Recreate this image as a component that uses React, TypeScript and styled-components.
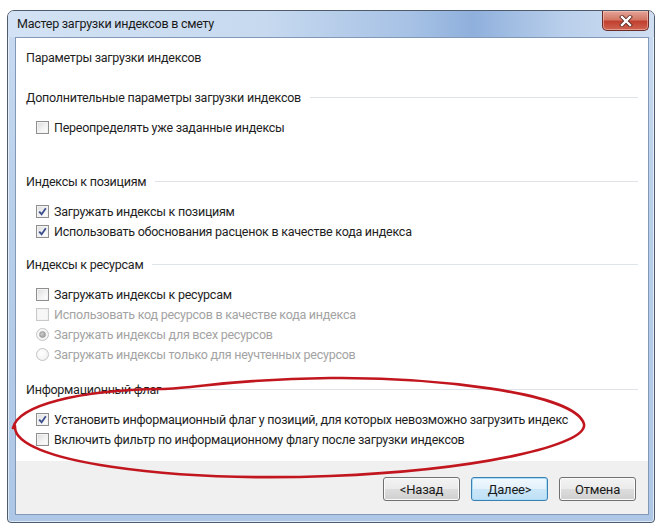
import React from "react";
import styled, { createGlobalStyle } from "styled-components";

const Global = createGlobalStyle`
  html, body { margin: 0; padding: 0; background: #ffffff; }
  body { font-family: Roboto, "Noto Sans", sans-serif; }
`;

const Root = styled.div`
  position: relative;
  width: 663px;
  height: 527px;
  overflow: hidden;
  background: #ffffff;
  padding: 10px 8px 4px 7px;
  box-sizing: border-box;
`;

const Window = styled.div`
  width: 648px;
  height: 513px;
  box-sizing: border-box;
  border: 1px solid #4d5b6c;
  border-radius: 7px 7px 4px 4px;
  background: linear-gradient(180deg, #c9dbf1 0%, #b8cfea 40%, #aec7e6 100%);
  display: flex;
  flex-direction: column;
  padding: 0 5px 7px 7px;
  box-shadow: inset 0 0 0 1px rgba(255, 255, 255, 0.6);
`;

const TitleBar = styled.div`
  height: 26px;
  display: flex;
  align-items: flex-start;
  margin: 0 -5px 0 -7px;
  padding-left: 9px;
  border-radius: 6px 6px 0 0;
  background: linear-gradient(
    90deg,
    #d3e2f4 0%,
    #c6d9ef 40%,
    #a7c2e5 62%,
    #8fb0dc 72%,
    #b9cfeb 86%,
    #d0def1 100%
  );
`;

const Title = styled.span`
  margin-top: 4px;
  font-size: 12.5px;
  line-height: 18px;
  color: #1a1a1a;
  letter-spacing: -0.25px;
`;

const CloseButton = styled.div`
  margin-left: auto;
  margin-right: 5px;
  width: 47px;
  height: 20px;
  box-sizing: border-box;
  border: 1px solid #6a2c26;
  border-top: none;
  border-radius: 0 0 5px 5px;
  background: linear-gradient(180deg, #e3a497 0%, #d47866 45%, #c2402f 55%, #cf6452 100%);
  display: flex;
  align-items: center;
  justify-content: center;
  box-shadow: inset 0 0 0 1px rgba(255, 210, 200, 0.5);
`;

const Client = styled.div`
  flex: 1;
  display: flex;
  flex-direction: column;
  border: 1px solid #8199b6;
  background: #ffffff;
`;

const Body = styled.div`
  flex: 1;
  padding: 10px 10px 0 10px;
  display: flex;
  flex-direction: column;
  font-size: 12.5px;
  letter-spacing: -0.25px;
  color: #1e1e1e;
`;

const PageTitle = styled.div`
  height: 20px;
  line-height: 20px;
`;

const Section = styled.div<{ $top: number }>`
  margin-top: ${(p) => p.$top}px;
  display: flex;
  flex-direction: column;
`;

const Header = styled.div`
  height: 20px;
  display: flex;
  align-items: center;
  gap: 9px;
  margin-bottom: 10px;
  &::after {
    content: "";
    flex: 1;
    height: 1px;
    background: #dde3e9;
  }
`;

const Row = styled.label<{ $disabled?: boolean }>`
  height: 20px;
  display: flex;
  align-items: center;
  gap: 5px;
  padding-left: 10px;
  color: ${(p) => (p.$disabled ? "#a3a3a3" : "#1e1e1e")};
`;

const Box = styled.span<{ $disabled?: boolean }>`
  width: 13px;
  height: 13px;
  box-sizing: border-box;
  flex: none;
  border: 1px solid ${(p) => (p.$disabled ? "#c9c9c9" : "#8f8f8f")};
  background: ${(p) =>
    p.$disabled
      ? "#f7f7f7"
      : "linear-gradient(135deg, #dcdcdc 0%, #f4f4f4 60%, #ffffff 100%)"};
  box-shadow: inset 0 0 0 1px ${(p) => (p.$disabled ? "#f2f2f2" : "#f3f3f3")};
  display: flex;
  align-items: center;
  justify-content: center;
`;

const Radio = styled.span<{ $checked?: boolean }>`
  width: 13px;
  height: 13px;
  box-sizing: border-box;
  flex: none;
  border-radius: 50%;
  border: 1px solid #c4c4c4;
  background: radial-gradient(circle at 40% 40%, #ffffff 0%, #ececec 100%);
  display: flex;
  align-items: center;
  justify-content: center;
  &::after {
    content: "";
    display: ${(p) => (p.$checked ? "block" : "none")};
    width: 5px;
    height: 5px;
    border-radius: 50%;
    background: radial-gradient(circle at 40% 40%, #d0d0d0 0%, #8e8e8e 100%);
    border: 1px solid #a0a0a0;
  }
`;

const Footer = styled.div`
  height: 53px;
  background: #f0f0f0;
  display: flex;
  align-items: center;
  justify-content: flex-end;
  gap: 11px;
  padding: 3px 12px 0 0;
  box-sizing: border-box;
`;

const Button = styled.div<{ $default?: boolean }>`
  width: 77px;
  height: 24px;
  box-sizing: border-box;
  border-radius: 3px;
  border: 1px solid ${(p) => (p.$default ? "#3c7fb1" : "#707070")};
  background: ${(p) =>
    p.$default
      ? "linear-gradient(180deg, #f0f8fd 0%, #e3f1fb 48%, #cbe6f8 52%, #bfe0f6 100%)"
      : "linear-gradient(180deg, #f3f3f3 0%, #ebebeb 48%, #dddddd 52%, #cfcfcf 100%)"};
  box-shadow: inset 0 0 0 1px ${(p) => (p.$default ? "#a9dcf6" : "#fbfbfb")};
  display: flex;
  align-items: center;
  justify-content: center;
  font-size: 13px;
  letter-spacing: -0.2px;
  color: #1a1a1a;
`;

const Overlay = styled.svg`
  position: absolute;
  left: 0;
  top: 0;
  width: 663px;
  height: 527px;
  pointer-events: none;
`;

const Check = () => (
  <svg width="9" height="9" viewBox="0 0 9 9">
    <path d="M1.2 4.6 L3.6 7.2 L7.8 1.2" fill="none" stroke="#3d4f8c" strokeWidth="1.8" />
  </svg>
);

const CheckRow: React.FC<{ checked?: boolean; disabled?: boolean; children: React.ReactNode }> = ({
  checked,
  disabled,
  children,
}) => (
  <Row $disabled={disabled}>
    <Box $disabled={disabled}>{checked && <Check />}</Box>
    {children}
  </Row>
);

const RadioRow: React.FC<{ checked?: boolean; children: React.ReactNode }> = ({ checked, children }) => (
  <Row $disabled>
    <Radio $checked={checked} />
    {children}
  </Row>
);

export default function App() {
  return (
    <>
      <Global />
      <Root>
        <Window>
          <TitleBar>
            <Title>Мастер загрузки индексов в смету</Title>
            <CloseButton>
              <svg width="14" height="12" viewBox="0 0 14 12">
                <path d="M3 2 L11 10 M11 2 L3 10" stroke="#5a2a24" strokeWidth="4" strokeLinecap="square" />
                <path d="M3 2 L11 10 M11 2 L3 10" stroke="#ffffff" strokeWidth="2.4" strokeLinecap="square" />
              </svg>
            </CloseButton>
          </TitleBar>
          <Client>
            <Body>
              <PageTitle>Параметры загрузки индексов</PageTitle>
              <Section $top={19}>
                <Header>Дополнительные параметры загрузки индексов</Header>
                <CheckRow>Переопределять уже заданные индексы</CheckRow>
              </Section>
              <Section $top={34}>
                <Header>Индексы к позициям</Header>
                <CheckRow checked>Загружать индексы к позициям</CheckRow>
                <CheckRow checked>Использовать обоснования расценок в качестве кода индекса</CheckRow>
              </Section>
              <Section $top={13}>
                <Header>Индексы к ресурсам</Header>
                <CheckRow>Загружать индексы к ресурсам</CheckRow>
                <CheckRow disabled>Использовать код ресурсов в качестве кода индекса</CheckRow>
                <RadioRow checked>Загружать индексы для всех ресурсов</RadioRow>
                <RadioRow>Загружать индексы только для неучтенных ресурсов</RadioRow>
              </Section>
              <Section $top={15}>
                <Header>Информационный флаг</Header>
                <CheckRow checked>
                  Установить информационный флаг у позиций, для которых невозможно загрузить индекс
                </CheckRow>
                <CheckRow>Включить фильтр по информационному флагу после загрузки индексов</CheckRow>
              </Section>
            </Body>
            <Footer>
              <Button>&lt;Назад</Button>
              <Button $default>Далее&gt;</Button>
              <Button>Отмена</Button>
            </Footer>
          </Client>
        </Window>
        <Overlay viewBox="0 0 663 527">
          <path
            d="M 13 428 C 18 405, 80 390, 160 389 C 200 388, 230 379, 330 378 C 430 377, 575 392, 584 424 C 588 445, 480 470, 330 476 C 170 482, 12 462, 15 426"
            fill="none"
            stroke="#c2161f"
            strokeWidth="2.6"
            strokeLinecap="round"
          />
        </Overlay>
      </Root>
    </>
  );
}
